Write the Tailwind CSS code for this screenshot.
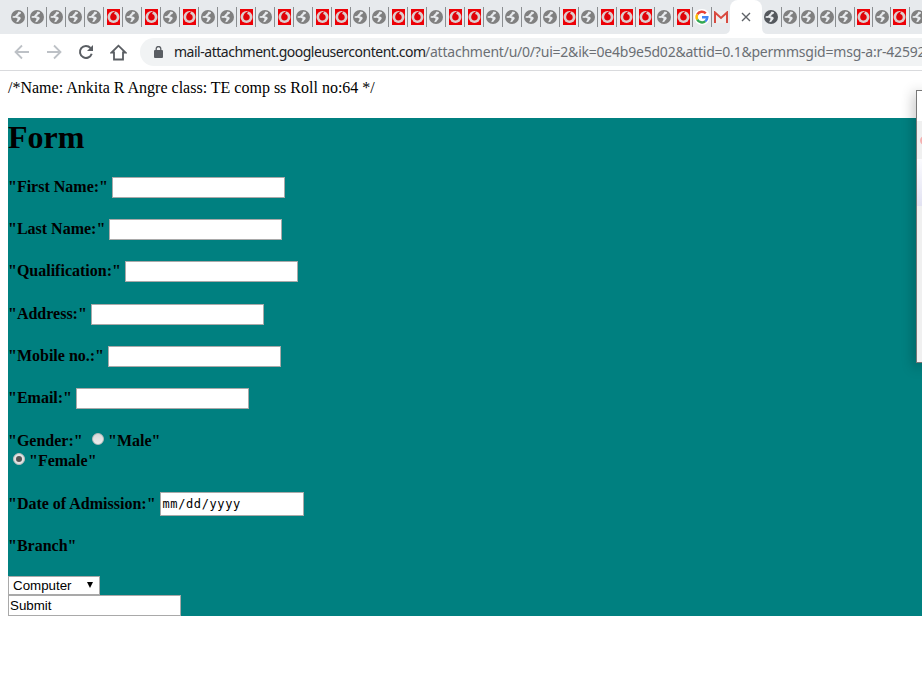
<!DOCTYPE html>
<html lang="en">
<head>
<meta charset="utf-8">
<title>Form</title>
<script src="https://cdn.jsdelivr.net/npm/@tailwindcss/browser@4"></script>
</head>
<body class="relative h-[691px] w-[922px] overflow-hidden bg-white text-black">
<svg class="hidden">
  <symbol id="globe" viewBox="0 0 14 14"><circle cx="7" cy="7" r="7" fill="currentColor"/><path d="M7.600 1.600 10 2.200C10.200 3.200 9.300 4.200 8 4.500 7.800 5.500 7 5.800 6.200 6.200 7.800 6.500 9.500 6.800 9.700 8 9.800 9.400 8.600 9.700 8.200 10.600 7.700 11.700 7 12.300 5.600 12.300L5.400 11C6.300 10.700 6 9.900 6.500 9.300 7 8.700 6.300 8 5.300 7.900 4 7.800 3.200 8 1.600 7.800L1.700 6.200 3.900 6C5 5.800 4.900 4.700 5.800 4.100 6.900 3.600 6.600 2.400 7.600 1.600Z" fill="#e7eaed"/></symbol>
  <symbol id="voda" viewBox="0 0 13 16"><path fill="#ed0006" d="M0 0h13v16H0z"/><circle cx="6.5" cy="8" r="6" fill="#dccfcf"/><path d="M9 2.200C7.800 3 7.300 3.900 7.200 5 9 5.500 9.900 6.900 9.700 8.700 9.400 10.500 8 11.500 6.400 11.500 4.500 11.400 3.200 10 3.200 8.200 3.200 5.300 5.500 2.600 9 2.200Z" fill="#df0209"/></symbol>
</svg>

<header class="h-[71px] overflow-hidden border-b border-[#d9dadd] bg-white">
  <div class="flex h-[34px] bg-[#e7eaed]">
    <div id="left" class="flex h-[34px] w-[730px] shrink-0 items-center pl-[9px]"></div>
    <div class="relative flex h-[34px] w-[32px] shrink-0 items-center justify-center rounded-t-[8px] bg-white">
      <svg class="h-[10px] w-[10px]" viewBox="0 0 10 10"><path d="M1 1l8 8M9 1L1 9" stroke="#5f6368" stroke-width="1.400"/></svg>
      <svg class="absolute bottom-0 -left-[6px] h-[6px] w-[6px]" viewBox="0 0 6 6"><path d="M6 0v6H0Q6 6 6 0" fill="#fff"/></svg>
      <svg class="absolute bottom-0 -right-[6px] h-[6px] w-[6px]" viewBox="0 0 6 6"><path d="M0 0v6h6Q0 6 0 0" fill="#fff"/></svg>
    </div>
    <div id="right" class="flex h-[34px] w-[160px] shrink-0 items-center overflow-hidden"></div>
  </div>
  <div class="flex h-[36px] items-center overflow-hidden pl-[14px]">
    <svg class="h-[16px] w-[16px] shrink-0" viewBox="0 0 16 16" fill="none" stroke="#bdc1c6" stroke-width="1.800"><path d="M15 8H2M8 1.500L1.500 8 8 14.500"/></svg>
    <svg class="ml-[16px] h-[16px] w-[16px] shrink-0" viewBox="0 0 16 16" fill="none" stroke="#bdc1c6" stroke-width="1.800"><path d="M1 8h13M8 1.500L14.500 8 8 14.500"/></svg>
    <svg class="ml-[16px] h-[16px] w-[16px] shrink-0" viewBox="0 0 16 16"><path d="M13.700 9.700A6 6 0 1 1 12.500 4" fill="none" stroke="#5a5e63" stroke-width="2"/><path d="M15 1v6H9Z" fill="#5a5e63"/></svg>
    <svg class="ml-[16px] h-[17px] w-[17px] shrink-0" viewBox="0 0 17 17"><path d="M8.500 1.700L1.600 8.500H4V15.500H13V8.500H15.400Z" fill="none" stroke="#5a5e63" stroke-width="1.800"/></svg>
    <div class="ml-[13px] flex h-[28px] min-w-0 flex-1 items-center overflow-hidden rounded-l-full bg-[#f1f3f4] pl-[14px]">
      <svg class="h-[12px] w-[9px] shrink-0" viewBox="0 0 9 12"><rect y="4" width="9" height="8" rx="1" fill="#5a5e63"/><path d="M2.200 4.500V2.800a2.300 2.300 0 0 1 4.600 0v1.700" fill="none" stroke="#5a5e63" stroke-width="1.300"/></svg>
      <div class="ml-[11px] flex text-[14px] leading-[20px] whitespace-nowrap font-['Noto_Sans',sans-serif]"><span class="w-[251px] shrink-0 tracking-[-0.48px] text-[#202124]">mail-attachment.googleusercontent.com</span><span class="tracking-[-0.22px] text-[#6b6f74]">/attachment/u/0/?ui=2&amp;ik=0e4b9e5d02&amp;attid=0.1&amp;permmsgid=msg-a:r-42592</span></div>
    </div>
  </div>
</header>

<main class="pl-[8px] font-['Liberation_Serif',serif] text-[16px] leading-[18px]">
  <p class="pt-[8px] whitespace-nowrap">/*Name: Ankita R Angre class: TE comp ss Roll no:64 */</p>
  <form class="mt-[21px] h-[498px] bg-[#008080] font-bold">
    <h1 class="h-[59px] text-[32px] leading-[38px]">Form</h1>
    <div class="flex h-[42px] gap-[4px]"><label class="leading-[20px]">"First Name:"</label><input class="h-[21px] w-[173px] border border-[#a9a9a9] bg-white"></div>
    <div class="flex h-[42px] gap-[4px]"><label class="leading-[20px]">"Last Name:"</label><input class="h-[21px] w-[173px] border border-[#a9a9a9] bg-white"></div>
    <div class="flex h-[43px] gap-[4px]"><label class="leading-[20px]">"Qualification:"</label><input class="h-[21px] w-[173px] border border-[#a9a9a9] bg-white"></div>
    <div class="flex h-[42px] gap-[4px]"><label class="leading-[20px]">"Address:"</label><input class="h-[21px] w-[173px] border border-[#a9a9a9] bg-white"></div>
    <div class="flex h-[42px] gap-[4px]"><label class="leading-[20px]">"Mobile no.:"</label><input class="h-[21px] w-[173px] border border-[#a9a9a9] bg-white"></div>
    <div class="flex h-[43px] gap-[4px]"><label class="leading-[20px]">"Email:"</label><input class="h-[21px] w-[173px] border border-[#a9a9a9] bg-white"></div>
    <div class="flex h-[20px] leading-[20px]"><span class="w-[84px]">"Gender:"</span><span class="mt-[2px] mr-[4px] h-[12px] w-[12px] rounded-full border border-[#bbb] bg-linear-to-b from-[#d8d8d8] to-[#eee]"></span><span>"Male"</span></div>
    <div class="flex h-[41px] pl-[5px] leading-[20px]"><span class="mt-[2px] mr-[4px] flex h-[12px] w-[12px] items-center justify-center rounded-full border border-[#bbb] bg-[#e3e3e3]"><i class="h-[6px] w-[6px] rounded-full bg-[#555]"></i></span><span>"Female"</span></div>
    <div class="flex h-[45px] gap-[4px]"><label class="leading-[24px]">"Date of Admission:"</label><div class="h-[24px] w-[144px] border border-[#a9a9a9] bg-white pl-[2px] text-[12px] leading-[22px] font-normal tracking-[0.6px] font-['DejaVu_Sans_Mono',monospace]">mm/dd/yyyy</div></div>
    <div class="h-[39px] leading-[18px]">"Branch"</div>
    <div class="flex h-[19px] w-[92px] items-center justify-between border border-[#a9a9a9] bg-white pr-[6px] pl-[4px] text-[13.333px] leading-[17px] font-normal font-['Liberation_Sans',sans-serif]"><span>Computer</span><svg class="-mt-[2px] h-[6px] w-[6px]" viewBox="0 0 6 6"><path d="M0 0h6L3 6Z"/></svg></div>
    <input type="text" value="Submit" class="block h-[21px] w-[173px] border border-[#a9a9a9] bg-white px-[1px] text-[13.333px] font-normal font-['Liberation_Sans',sans-serif]">
  </form>
</main>

<aside class="absolute top-[90px] left-[916px] h-[273px] w-[6px] border border-r-0 border-[#777] bg-[#f0f0f0] shadow-[0_3px_14px_rgba(0,0,0,0.45)]">
  <div class="h-[30px] bg-white"></div>
  <div class="flex h-[38px] items-center overflow-hidden pl-[3px]"><i class="h-[9px] w-[9px] shrink-0 rounded-full border-2 border-[#f4b0b0]"></i></div>
  <div class="h-[47px] bg-linear-to-b from-[#fbfbfe] to-[#e2e2f2]"></div>
</aside>

<script>
const icons = {
  g: '<svg class="h-[14px] w-[14px] text-[#808080]"><use href="#globe"/></svg>',
  d: '<svg class="h-[14px] w-[14px] text-[#54585d]"><use href="#globe"/></svg>',
  v: '<svg class="h-[16px] w-[13px]"><use href="#voda"/></svg>',
  G: '<svg class="h-[16px] w-[16px] shrink-0 rounded-full bg-white" viewBox="-.5 -.5 15 15" fill="none" stroke-width="2.300"><path d="M2.600 4.500A5 5 0 0 1 10.500 3.500" stroke="#ea4335"/><path d="M2.600 4.500A5 5 0 0 0 2.600 9.500" stroke="#fbbc05"/><path d="M2.600 9.400A5 5 0 0 0 10.200 10.900" stroke="#34a853"/><path d="M7 7.200h5A5 5 0 0 1 10.100 11" stroke="#4285f4"/></svg>',
  M: '<svg class="h-[12px] w-[14px] -ml-[2px]" viewBox="0 0 14 12"><path d="M0 0h14v12H0z" fill="#eee"/><path d="M1 12V1.500l6 5.500 6-5.500V12" fill="none" stroke="#d84b40" stroke-width="2"/></svg>'
};
const cell = (c, w, line) => '<div class="flex h-[20px] shrink-0 items-center justify-center ' + (line ? 'border-r border-[#8b8e91]' : '') + '" style="width:' + w + 'px">' + icons[c] + '</div>';
left.innerHTML = [...'gggggvgvgvggvgvgvvggvvgvvggggvgvvvgvGM'].map((c, i, a) => cell(c, 19, i < a.length - 1)).join('');
right.innerHTML = cell('d', 19.5, true) + [...'ggggvgvg'].map(c => cell(c, 18.3, true)).join('');
</script>
</body>
</html>
